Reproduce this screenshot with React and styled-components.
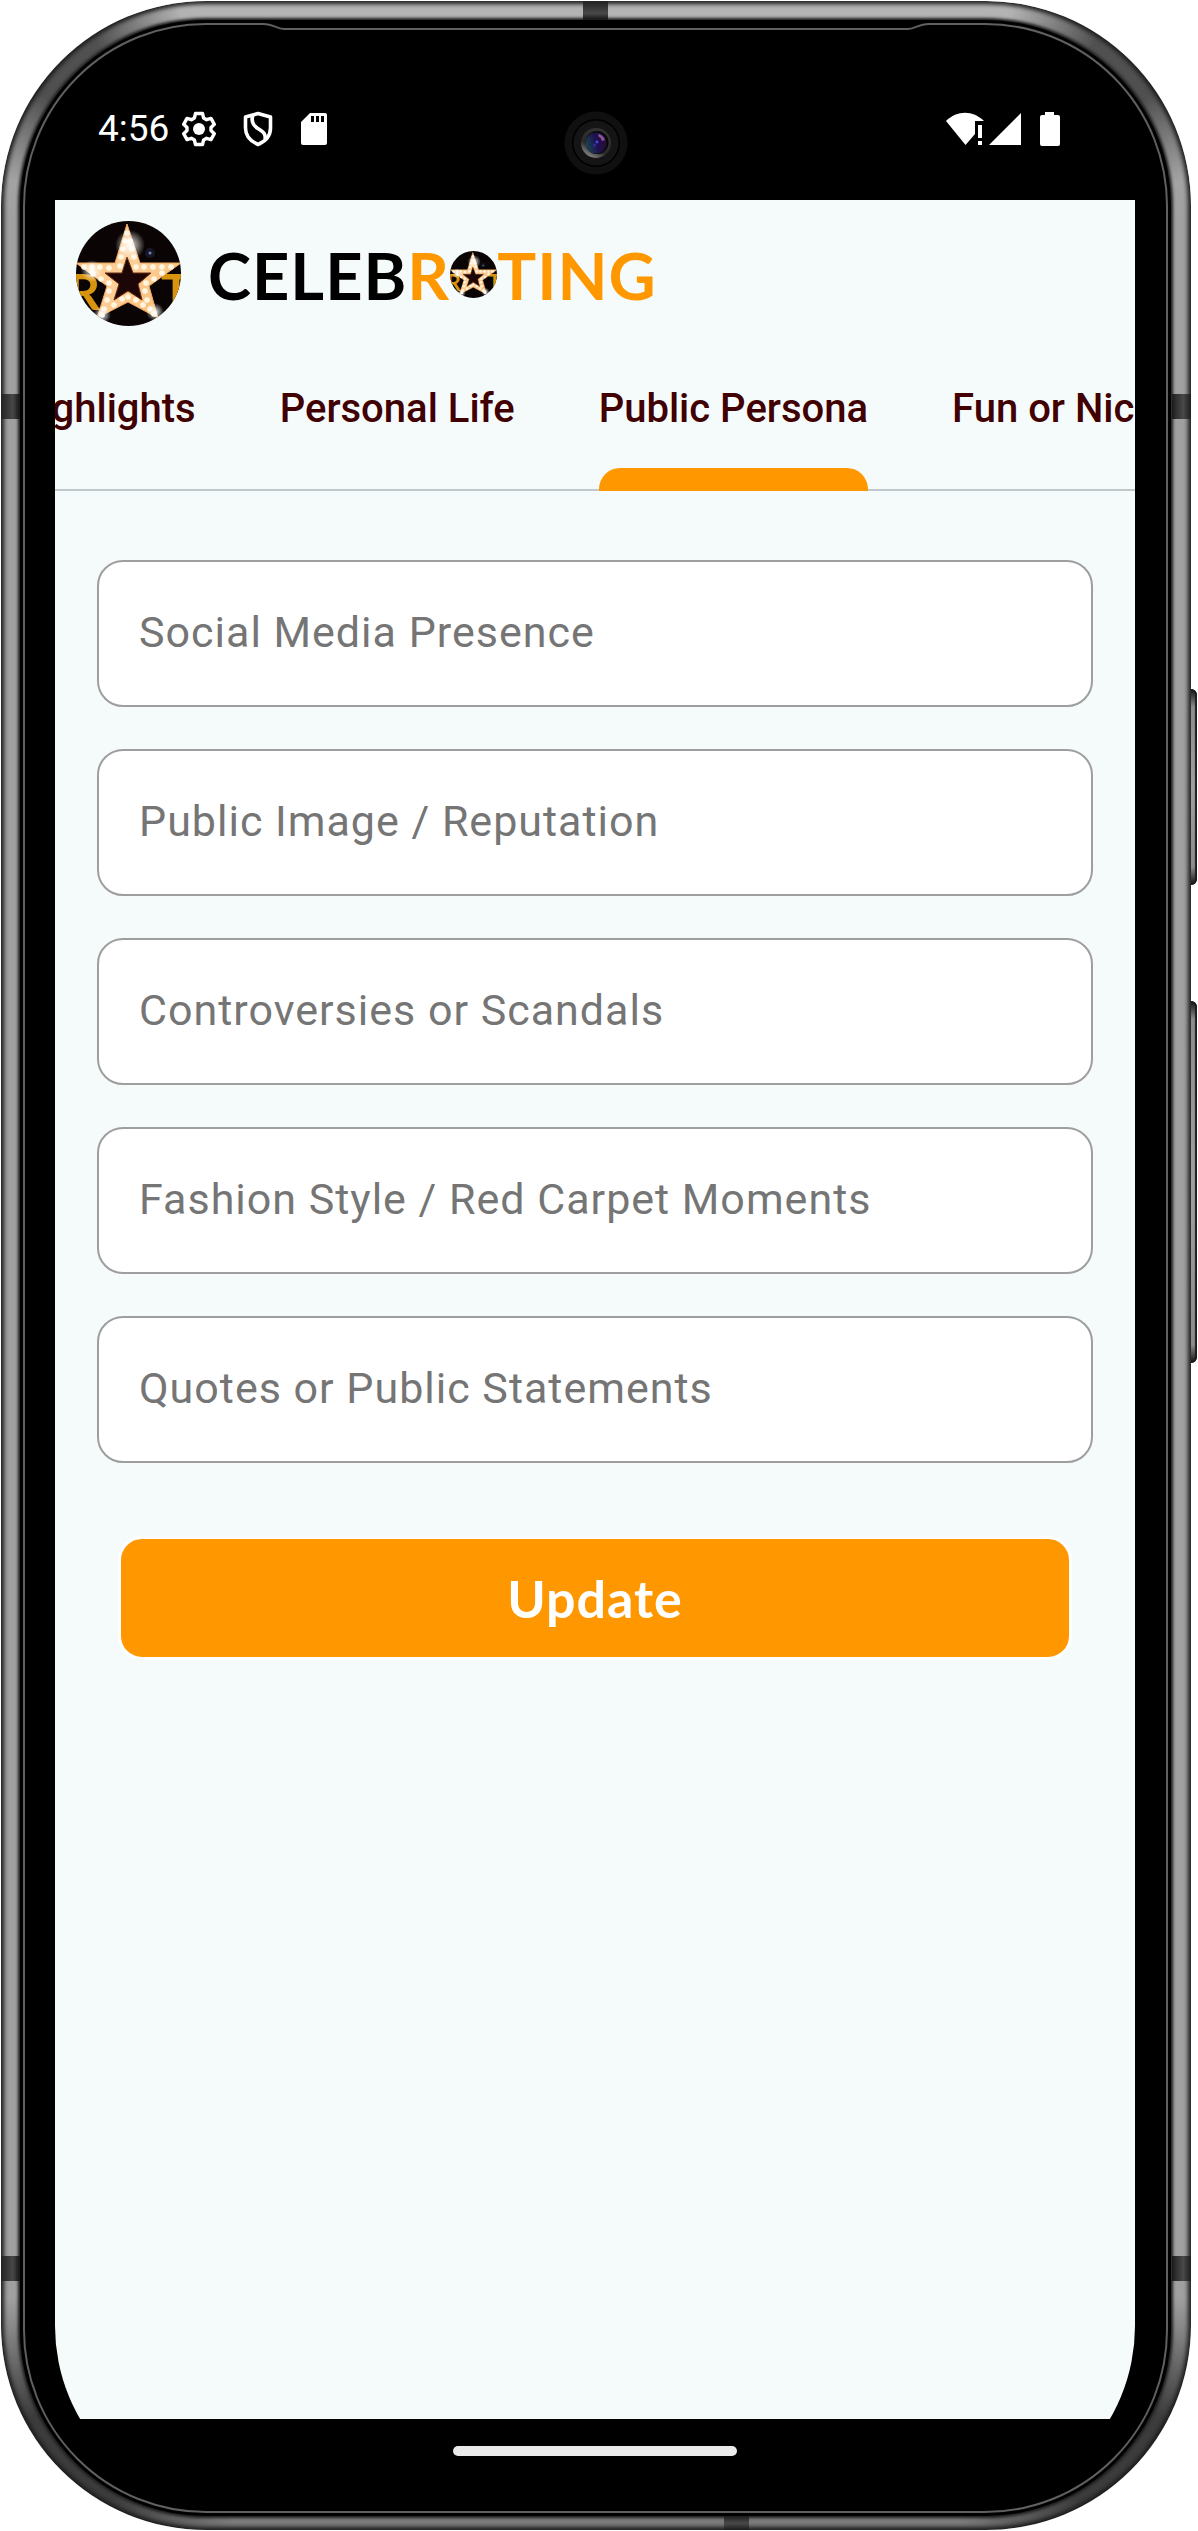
import React, { useState } from "react";
import styled, { createGlobalStyle, css } from "styled-components";

const GlobalStyle = createGlobalStyle`
  *, *::before, *::after { box-sizing: border-box; }
  body { margin: 0; background: #ffffff; font-family: Roboto, "Liberation Sans", sans-serif; }
`;

const Page = styled.div`
  display: flex;
  min-height: 100vh;
  padding: 1px 7px 1px 1px;
`;

/* ---------- device ---------- */

const Phone = styled.div`
  position: relative;
  flex: 1;
  min-width: 0;
  display: flex;
  padding: 19px 20px 14px 19px;
  border-radius: 205px;
  background:
    radial-gradient(circle at 60px 60px, #505050 40px, transparent 130px),
    radial-gradient(circle at calc(100% - 60px) 60px, #505050 40px, transparent 130px),
    radial-gradient(circle at 60px calc(100% - 60px), #3c3c3c 60px, transparent 180px),
    radial-gradient(circle at calc(100% - 60px) calc(100% - 60px), #3c3c3c 60px, transparent 180px),
    linear-gradient(#b4b4b4, #a0a0a0 220px, #a0a0a0 calc(100% - 200px), #7a7a7a);
  box-shadow: inset 0 0 4px 3px #1c1c1c;
`;

const Bezel = styled.div`
  position: relative;
  flex: 1;
  min-width: 0;
  display: flex;
  padding: 3px;
  border-radius: 186px;
  background: #000000;
  box-shadow: 0 0 3px 2px #1c1c1c;
`;

const Rim = styled.div`
  flex: 1;
  min-width: 0;
  display: flex;
  padding: 0 31px 0 30px;
  border: 2px solid #606060;
  border-radius: 183px;
`;

const Glass = styled.div`
  flex: 1;
  min-width: 0;
  display: flex;
  flex-direction: column;
  overflow: hidden;
  border-radius: 0 0 185px 185px;
`;

const SpeakerSlot = styled.svg`
  position: absolute;
  top: 2px;
  left: 50%;
  width: 664px;
  height: 10px;
  margin-left: -332px;
`;

const AntennaBand = styled.span`
  position: absolute;
  background: linear-gradient(${(p) => (p.$across ? "180deg" : "90deg")}, #222222, #484848 60%, #1c1c1c);
  ${(p) => p.$at}
`;

const SideKey = styled.span`
  position: absolute;
  right: -6px;
  top: ${(p) => p.$top}px;
  width: 6px;
  height: ${(p) => p.$length}px;
  border-radius: 0 6px 6px 0;
  background: linear-gradient(#111111, #8c8c8c 18px, #a0a0a0 50%, #8c8c8c calc(100% - 18px), #111111);
  box-shadow: inset -2px 0 1px #1c1c1c;
`;

const Camera = styled.svg`
  position: absolute;
  top: 110px;
  left: 50%;
  width: 64px;
  height: 64px;
  margin-left: -32px;
`;

/* ---------- system bars ---------- */

const StatusBar = styled.div`
  display: flex;
  justify-content: space-between;
  height: 175px;
  padding: 83px 70px 0 43px;
  color: #ffffff;
`;

const StatusGroup = styled.div`
  display: flex;
  align-items: center;
  height: 42px;
  gap: ${(p) => p.$gap}px;
`;

const Clock = styled.time`
  font-size: 37px;
  line-height: 42px;
  margin-right: -14px;
`;

const StatusIcon = styled.svg`
  display: block;
  flex: none;
  width: ${(p) => p.$width}px;
  height: 36px;
`;

const NavBar = styled.div`
  display: flex;
  justify-content: center;
  height: 92px;
  padding-top: 27px;
`;

const HomeHandle = styled.span`
  width: 284px;
  height: 10px;
  border-radius: 5px;
  background: #eaeaea;
`;

/* ---------- app ---------- */

const Screen = styled.main`
  flex: 1;
  display: flex;
  flex-direction: column;
  background: #f5fbfb;
`;

const Header = styled.header`
  display: flex;
  align-items: center;
  gap: 27px;
  height: 147px;
  padding: 0 21px;
`;

const StarArt = styled.svg`
  display: block;
  flex: none;
  width: ${(p) => p.$size}px;
  height: ${(p) => p.$size}px;
`;

const Wordmark = styled.h1`
  display: flex;
  align-items: center;
  margin: 0;
  padding-top: 2px;
  font-family: Lato, "Liberation Sans", sans-serif;
  font-size: 65px;
  font-weight: 700;
  line-height: 78px;
  letter-spacing: 1px;
  color: #000000;
`;

const Accent = styled.span`
  color: #ff9800;
`;

const TabList = styled.div`
  display: flex;
  height: 144px;
  overflow: hidden;
  box-shadow: inset 0 -2px 0 #bfc8ca;
`;

const Tab = styled.button`
  flex: none;
  display: flex;
  flex-direction: column;
  align-items: center;
  justify-content: space-between;
  padding: 40px 0 0;
  margin: 0 42px;
  border: 0;
  background: none;
  color: #410002;
  font-family: Roboto, "Liberation Sans", sans-serif;
  font-size: 40px;
  font-weight: 500;
  line-height: 44px;
  white-space: nowrap;
  cursor: pointer;

  &:first-child { margin-left: -42px; }

  ${(p) =>
    p.$active &&
    css`
      &::after {
        content: "";
        width: 100%;
        height: 23px;
        border-radius: 21px 21px 0 0;
        background: #ff9800;
      }
    `}
`;

const Form = styled.form`
  display: flex;
  flex-direction: column;
  gap: 42px;
  padding: 69px 42px 42px;
`;

const Field = styled.input`
  width: 100%;
  height: 147px;
  padding: 0 40px 4px;
  border: 2px solid #9e9e9e;
  border-radius: 26px;
  background: #ffffff;
  color: #212121;
  font-family: Roboto, "Liberation Sans", sans-serif;
  font-size: 43px;
  letter-spacing: 1px;
  outline: none;

  &::placeholder { color: #757575; opacity: 1; }
  &:focus { border-color: #ff9800; }
`;

const SubmitButton = styled.button`
  height: 124px;
  margin: 31px 21px 0;
  padding: 0;
  border: 3px solid #ffffff;
  border-radius: 24px;
  background: #ff9800;
  color: #ffffff;
  font-family: Lato, "Liberation Sans", sans-serif;
  font-size: 52px;
  font-weight: 700;
  letter-spacing: 1px;
  cursor: pointer;
`;

const BULBS = [
  [51, 12], [49, 20], [54, 20], [47, 28], [56, 28], [45, 36], [58, 36], [44, 45], [60, 46],
  [8, 46], [16, 46], [24, 46], [33, 47], [17, 53], [25, 58], [33, 62], [68, 46], [77, 46],
  [86, 46], [95, 46], [86, 52], [78, 58], [70, 62], [33, 70], [31, 79], [28, 88], [38, 84],
  [46, 78], [52, 76], [60, 79], [67, 84], [74, 88], [71, 79], [69, 70], [78, 93], [26, 94],
];

function Star({ id, size }) {
  return (
    <StarArt $size={size} viewBox="0 0 105 105" aria-hidden="true">
      <defs>
        <clipPath id={`${id}-clip`}>
          <circle cx="52.5" cy="52.5" r="52.5" />
        </clipPath>
        <radialGradient id={`${id}-flare`}>
          <stop offset="0" stopColor="#fff" />
          <stop offset="0.35" stopColor="#fff" stopOpacity="0.6" />
          <stop offset="1" stopColor="#fff" stopOpacity="0" />
        </radialGradient>
        <linearGradient id={`${id}-gold`} x1="0" y1="0" x2="1" y2="1">
          <stop offset="0" stopColor="#f8bd76" />
          <stop offset="0.5" stopColor="#fdd09a" />
          <stop offset="1" stopColor="#f7b76c" />
        </linearGradient>
      </defs>
      <g clipPath={`url(#${id}-clip)`}>
        <rect width="105" height="105" fill="#0a0504" />
        <g fill="#d8940f" fontFamily="Lato, sans-serif" fontSize="50" fontWeight="700">
          <text x="-8" y="89">R</text>
          <text x="85" y="89">T</text>
        </g>
        <path
          d="M51 3 L64 42 H105 L73 65 L82 97 L52 81 L21 97 L31 65 L0 42 H39 Z"
          fill={`url(#${id}-gold)`}
          stroke="#f0a860"
          strokeWidth="1"
        />
        <g fill="#fff6e2">
          {BULBS.map(([x, y]) => (
            <circle key={`${x}-${y}`} cx={x} cy={y} r="2.8" />
          ))}
        </g>
        <path
          d="M51 36 L57 52 H75 L62 63 L66 79 L52 70 L38 79 L43 63 L29 52 H46 Z"
          fill="#1c0606"
          stroke="#6a2c10"
          strokeWidth="1"
        />
        <circle cx="54" cy="24" r="15" fill={`url(#${id}-flare)`} />
        <circle cx="16" cy="50" r="11" fill={`url(#${id}-flare)`} />
        <circle cx="79" cy="91" r="9" fill={`url(#${id}-flare)`} />
        <circle cx="26" cy="94" r="9" fill={`url(#${id}-flare)`} />
        <circle cx="74" cy="32" r="5" fill="#28325a" opacity="0.4" />
        <circle cx="74" cy="32" r="1.5" fill="#7080b8" />
      </g>
    </StarArt>
  );
}

function FrontCamera() {
  return (
    <Camera viewBox="0 0 64 64" aria-hidden="true">
      <defs>
        <linearGradient id="cam-ring" x1="0.2" y1="1" x2="0.7" y2="0.1">
          <stop offset="0" stopColor="#9a9a9a" />
          <stop offset="0.4" stopColor="#2a2a2a" />
          <stop offset="1" stopColor="#333333" />
        </linearGradient>
        <linearGradient id="cam-lens" x1="0" y1="0.6" x2="1" y2="0.3">
          <stop offset="0" stopColor="#1d4650" />
          <stop offset="0.5" stopColor="#1c1250" />
          <stop offset="1" stopColor="#2a0a38" />
        </linearGradient>
      </defs>
      <circle cx="32" cy="32" r="31.5" fill="#101010" />
      <circle cx="32" cy="32" r="24" fill="#000000" />
      <circle cx="32" cy="32" r="22.5" fill="#151515" />
      <circle cx="32" cy="32" r="15" fill="url(#cam-ring)" />
      <circle cx="33" cy="31.5" r="11.5" fill="#080808" />
      <circle cx="32" cy="32" r="10.5" fill="url(#cam-lens)" />
      <path d="M35 23 A10 10 0 0 1 41 29 L38 30 A7 7 0 0 0 34 25 Z" fill="#a868b0" opacity="0.8" />
      <circle cx="33" cy="31" r="1.4" fill="#5040f0" />
      <circle cx="30.5" cy="34" r="1.6" fill="#2c2c98" />
    </Camera>
  );
}

const TABS = ["Highlights", "Personal Life", "Public Persona", "Fun or Niche"];

const FIELDS = [
  "Social Media Presence",
  "Public Image / Reputation",
  "Controversies or Scandals",
  "Fashion Style / Red Carpet Moments",
  "Quotes or Public Statements",
];

export default function App() {
  const [active, setActive] = useState("Public Persona");

  return (
    <>
      <GlobalStyle />
      <Page>
        <Phone>
          <AntennaBand $across $at="top: 0; left: 582px; width: 25px; height: 20px;" />
          <AntennaBand $at="top: 393px; left: 0; width: 19px; height: 25px;" />
          <AntennaBand $at="top: 393px; right: 0; width: 19px; height: 25px;" />
          <AntennaBand $at="bottom: 249px; left: 0; width: 19px; height: 25px;" />
          <AntennaBand $at="bottom: 249px; right: 0; width: 19px; height: 25px;" />
          <AntennaBand $across $at="bottom: 0; left: 723px; width: 25px; height: 16px;" />
          <SideKey $top={688} $length={196} />
          <SideKey $top={1000} $length={362} />
          <Bezel>
            <Rim>
              <Glass>
                <StatusBar>
                  <StatusGroup $gap={27}>
                    <Clock>4:56</Clock>
                    <StatusIcon $width={34} viewBox="0 0 34 36" role="img" aria-label="Settings">
                      <path
                        d="M13.5 2.5 H20.5 L21.6 7 L24.6 8.7 L29 7.4 L32.3 13.3 L29 16.5 V19.5 L32.3 22.7 L29 28.6 L24.6 27.3 L21.6 29 L20.5 33.5 H13.5 L12.4 29 L9.4 27.3 L5 28.6 L1.7 22.7 L5 19.5 V16.5 L1.7 13.3 L5 7.4 L9.4 8.7 L12.4 7 Z"
                        fill="none"
                        stroke="#fff"
                        strokeWidth="3.4"
                        strokeLinejoin="round"
                      />
                      <circle cx="17" cy="18" r="6" fill="#fff" />
                    </StatusIcon>
                    <StatusIcon $width={30} viewBox="0 0 30 36" role="img" aria-label="Device protection">
                      <path
                        d="M15 2.5 L27.5 6 V17 C27.5 25 22 30.5 15 33.5 C8 30.5 2.5 25 2.5 17 V6 Z"
                        fill="none"
                        stroke="#fff"
                        strokeWidth="3.6"
                        strokeLinejoin="round"
                      />
                      <path
                        d="M10 4 C8 9 9 13 14 17 C20 21 23 22 22 28"
                        fill="none"
                        stroke="#fff"
                        strokeWidth="3.6"
                      />
                    </StatusIcon>
                    <StatusIcon $width={28} viewBox="0 0 28 36" role="img" aria-label="SD card">
                      <path
                        d="M10 2 H25 A2 2 0 0 1 27 4 V32 A2 2 0 0 1 25 34 H3 A2 2 0 0 1 1 32 V11 Z M11 5 V11 H14 V5 Z M16 5 V11 H19 V5 Z M21 5 V11 H24 V5 Z"
                        fill="#fff"
                        fillRule="evenodd"
                      />
                    </StatusIcon>
                  </StatusGroup>
                  <StatusGroup $gap={4}>
                    <StatusIcon $width={39} viewBox="0 0 39 36" role="img" aria-label="Wi-Fi without internet">
                      <path d="M0 10 C11 -1 27 -1 38 10 H29 V23 L19.5 34 Z" fill="#fff" />
                      <rect x="32" y="14" width="4" height="13" fill="#fff" />
                      <rect x="32" y="30" width="4" height="4" fill="#fff" />
                    </StatusIcon>
                    <StatusIcon $width={32} viewBox="0 0 32 36" role="img" aria-label="Mobile signal">
                      <path d="M32 2 V34 H0 Z" fill="#fff" />
                    </StatusIcon>
                    <StatusIcon $width={40} viewBox="-15 0 40 36" role="img" aria-label="Battery full">
                      <path
                        d="M5 1 H14 V4 H18 A2 2 0 0 1 20 6 V33 A2 2 0 0 1 18 35 H2 A2 2 0 0 1 0 33 V6 A2 2 0 0 1 2 4 H5 Z"
                        fill="#fff"
                      />
                    </StatusIcon>
                  </StatusGroup>
                </StatusBar>

                <Screen>
                  <Header>
                    <Star id="logo" size={105} />
                    <Wordmark>
                      CELEB<Accent>R</Accent>
                      <Star id="mark" size={47} />
                      <Accent>TING</Accent>
                    </Wordmark>
                  </Header>

                  <TabList role="tablist">
                    {TABS.map((label) => (
                      <Tab
                        key={label}
                        type="button"
                        role="tab"
                        aria-selected={label === active}
                        $active={label === active}
                        onClick={() => setActive(label)}
                      >
                        {label}
                      </Tab>
                    ))}
                  </TabList>

                  <Form onSubmit={(event) => event.preventDefault()}>
                    {FIELDS.map((label) => (
                      <Field key={label} type="text" placeholder={label} aria-label={label} />
                    ))}
                    <SubmitButton type="submit">Update</SubmitButton>
                  </Form>
                </Screen>

                <NavBar>
                  <HomeHandle />
                </NavBar>
              </Glass>
            </Rim>
            <SpeakerSlot viewBox="0 0 664 10" aria-hidden="true">
              <rect width="664" height="8" fill="#000" />
              <path
                d="M0 2 C10 2 12 7 20 7 H644 C652 7 654 2 664 2"
                fill="none"
                stroke="#606060"
                strokeWidth="2"
              />
            </SpeakerSlot>
          </Bezel>
          <FrontCamera />
        </Phone>
      </Page>
    </>
  );
}
